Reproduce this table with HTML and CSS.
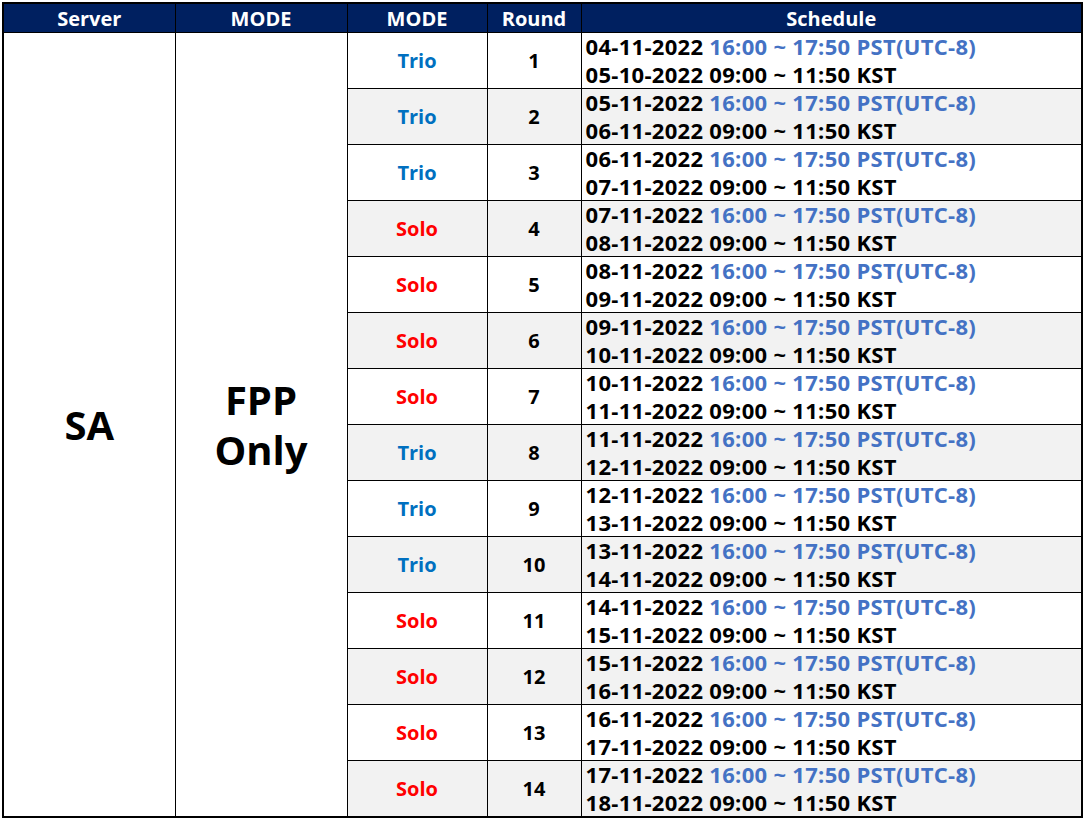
FILE: index.html
```html
<!DOCTYPE html>
<html>
<head>
<meta charset="utf-8">
<link rel="stylesheet" href="styles.css">
</head>
<body>
<div class="frame">
<table class="sched">
  <colgroup>
    <col class="c-server"><col class="c-mode"><col class="c-mode2"><col class="c-round"><col class="c-sch">
  </colgroup>
  <thead>
    <tr><th>Server</th><th>MODE</th><th>MODE</th><th>Round</th><th>Schedule</th></tr>
  </thead>
  <tbody>
    <tr>
      <td rowspan="14" class="big">SA</td>
      <td rowspan="14" class="big">FPP<br>Only</td>
      <td class="trio">Trio</td><td class="rnd">1</td>
      <td class="sch">04-11-2022 <span class="pst">16:00 ~ 17:50 PST(UTC-8)</span><br>05-10-2022 09:00 ~ 11:50 KST</td>
    </tr>
    <tr class="alt"><td class="trio">Trio</td><td class="rnd">2</td><td class="sch">05-11-2022 <span class="pst">16:00 ~ 17:50 PST(UTC-8)</span><br>06-11-2022 09:00 ~ 11:50 KST</td></tr>
    <tr><td class="trio">Trio</td><td class="rnd">3</td><td class="sch">06-11-2022 <span class="pst">16:00 ~ 17:50 PST(UTC-8)</span><br>07-11-2022 09:00 ~ 11:50 KST</td></tr>
    <tr class="alt"><td class="solo">Solo</td><td class="rnd">4</td><td class="sch">07-11-2022 <span class="pst">16:00 ~ 17:50 PST(UTC-8)</span><br>08-11-2022 09:00 ~ 11:50 KST</td></tr>
    <tr><td class="solo">Solo</td><td class="rnd">5</td><td class="sch">08-11-2022 <span class="pst">16:00 ~ 17:50 PST(UTC-8)</span><br>09-11-2022 09:00 ~ 11:50 KST</td></tr>
    <tr class="alt"><td class="solo">Solo</td><td class="rnd">6</td><td class="sch">09-11-2022 <span class="pst">16:00 ~ 17:50 PST(UTC-8)</span><br>10-11-2022 09:00 ~ 11:50 KST</td></tr>
    <tr><td class="solo">Solo</td><td class="rnd">7</td><td class="sch">10-11-2022 <span class="pst">16:00 ~ 17:50 PST(UTC-8)</span><br>11-11-2022 09:00 ~ 11:50 KST</td></tr>
    <tr class="alt"><td class="trio">Trio</td><td class="rnd">8</td><td class="sch">11-11-2022 <span class="pst">16:00 ~ 17:50 PST(UTC-8)</span><br>12-11-2022 09:00 ~ 11:50 KST</td></tr>
    <tr><td class="trio">Trio</td><td class="rnd">9</td><td class="sch">12-11-2022 <span class="pst">16:00 ~ 17:50 PST(UTC-8)</span><br>13-11-2022 09:00 ~ 11:50 KST</td></tr>
    <tr class="alt"><td class="trio">Trio</td><td class="rnd">10</td><td class="sch">13-11-2022 <span class="pst">16:00 ~ 17:50 PST(UTC-8)</span><br>14-11-2022 09:00 ~ 11:50 KST</td></tr>
    <tr><td class="solo">Solo</td><td class="rnd">11</td><td class="sch">14-11-2022 <span class="pst">16:00 ~ 17:50 PST(UTC-8)</span><br>15-11-2022 09:00 ~ 11:50 KST</td></tr>
    <tr class="alt"><td class="solo">Solo</td><td class="rnd">12</td><td class="sch">15-11-2022 <span class="pst">16:00 ~ 17:50 PST(UTC-8)</span><br>16-11-2022 09:00 ~ 11:50 KST</td></tr>
    <tr><td class="solo">Solo</td><td class="rnd">13</td><td class="sch">16-11-2022 <span class="pst">16:00 ~ 17:50 PST(UTC-8)</span><br>17-11-2022 09:00 ~ 11:50 KST</td></tr>
    <tr class="alt"><td class="solo">Solo</td><td class="rnd">14</td><td class="sch">17-11-2022 <span class="pst">16:00 ~ 17:50 PST(UTC-8)</span><br>18-11-2022 09:00 ~ 11:50 KST</td></tr>
  </tbody>
</table>
</div>
</body>
</html>
```
FILE: styles.css
```css
html, body {
  margin: 0;
  padding: 0;
  background: #ffffff;
}
body {
  font-family: "Open Sans", "Noto Sans", sans-serif;
  font-weight: 700;
  color: #000;
}
.frame {
  padding: 2px 0 0 2px;
  width: 1082px;
}
.sched {
  border-collapse: collapse;
  table-layout: fixed;
  width: 1081px;
  border: 2px solid #000;
}
.c-server { width: 172px; }
.c-mode { width: 172px; }
.c-mode2 { width: 140px; }
.c-round { width: 94px; }
.c-sch { width: auto; }
.sched th {
  background: #002060;
  color: #fff;
  font-size: 20px;
  height: 28px;
  padding: 0;
  line-height: 27px;
  font-weight: 700;
  border: 1px solid #000;
}
.sched td {
  border: 1px solid #000;
  padding: 0;
  height: 55px;
  text-align: center;
  font-size: 20px;
  line-height: 27.5px;
}
.sched tr.alt td { background: #f2f2f2; }
.sched td.big {
  font-size: 40px;
  line-height: 50px;
  background: #fff;
}
.sched td.trio { color: #0070c0; }
.sched td.solo { color: #ff0000; }
.sched td.sch {
  text-align: left;
  padding-left: 4px;
  white-space: nowrap;
  font-size: 22px;
  letter-spacing: 0.3px;
}
.pst { color: #4472c4; }
```
